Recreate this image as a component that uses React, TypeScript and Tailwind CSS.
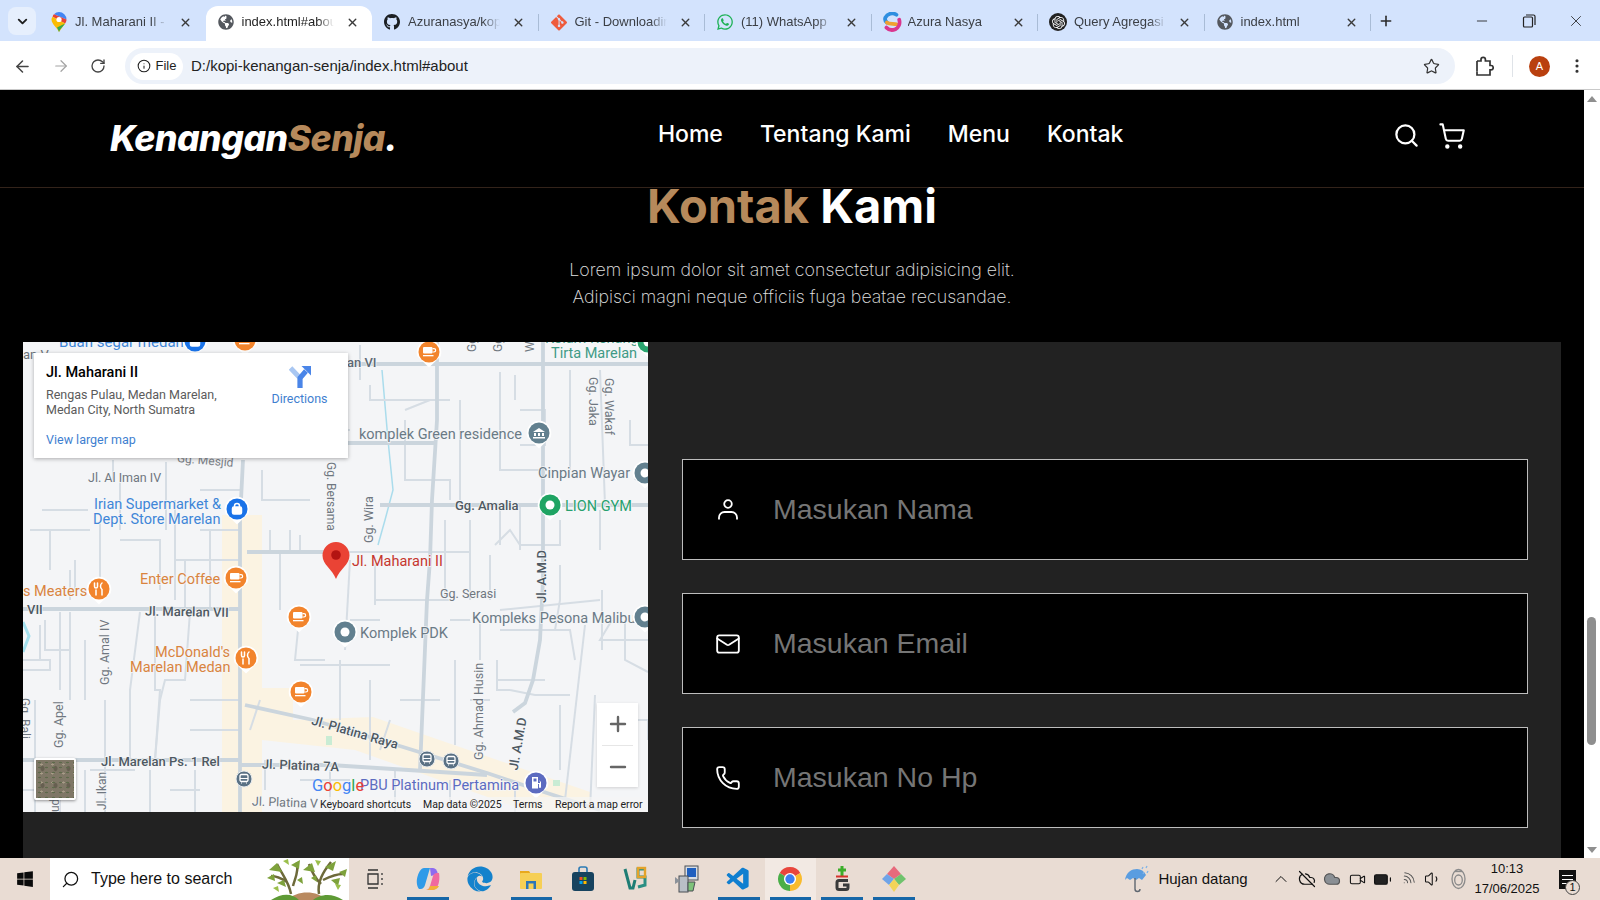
import type { ReactNode } from "react";
import {
  ArrowLeft,
  ArrowRight,
  Battery,
  ChevronDown,
  ChevronUp,
  CloudOff,
  Cloud,
  Info,
  Mail,
  Minus,
  MoreVertical,
  Phone,
  Plus,
  RotateCw,
  Search,
  ShoppingCart,
  Star,
  Video,
  Volume1,
  Wifi,
  X,
} from "lucide-react";
import { FaEdge, FaGithub, FaGlobeAmericas, FaWhatsapp, FaWindows } from "react-icons/fa";
import { SiGit, SiOpenai } from "react-icons/si";
import { VscVscode } from "react-icons/vsc";

const POPPINS = "font-['Inter','Noto_Sans',sans-serif]";

/* ---------- browser chrome ---------- */

function MapsFavicon() {
  return (
    <svg width="16" height="20" viewBox="0 0 16 20">
      <path d="M8 0a7.5 7.5 0 0 1 7.5 7.5L3 2.2A7.5 7.5 0 0 1 8 0z" fill="#4285f4" />
      <path d="M3 2.2 15.5 7.5c0 1.5-.5 2.7-1.4 4L1.6 4.8C1.9 3.6 2.3 2.9 3 2.2z" fill="#ea4335" />
      <path d="M1.6 4.8 14.1 11.500 8 20C6.500 16 .5 12 .5 7.500c0-1 .4-2 1.100-2.700z" fill="#fbbc04" />
      <path d="M6 15.500 14.100 11.500C12.500 14 9 16.500 8 20c-.4-1.700-1.200-3.100-2-4.500z" fill="#34a853" />
      <circle cx="8" cy="7.500" r="2.600" fill="#fff" />
    </svg>
  );
}

function AzuraFavicon() {
  return (
    <svg width="20" height="20" viewBox="0 0 18 18" fill="none" strokeWidth="3.400" strokeLinecap="round" className="shrink-0">
      <path d="M13 2.500A7 7 0 0 0 3 5c-.6 1.800 0 3.400 1.400 4.500" stroke="#2f8fe0" />
      <path d="M4.400 9.500c2.500 1.500 6 .8 8.600 1.500" stroke="#f0a030" />
      <path d="M15.500 7c1 3.500-.5 7-3.500 8.500-3 1.300-6 .5-8-1.500" stroke="#d9368f" />
    </svg>
  );
}

const TABS: { title: string; icon: ReactNode; active?: boolean }[] = [
  { title: "Jl. Maharani II - Google Maps", icon: <MapsFavicon /> },
  { title: "index.html#about", icon: <FaGlobeAmericas size={16} color="#54585e" />, active: true },
  { title: "Azuranasya/kopi-kenangan", icon: <FaGithub size={18} color="#1b1f23" /> },
  { title: "Git - Downloading Package", icon: <SiGit size={17} color="#ee5b3c" /> },
  { title: "(11) WhatsApp", icon: <FaWhatsapp size={18} color="#1fb257" /> },
  { title: "Azura Nasya", icon: <AzuraFavicon /> },
  {
    title: "Query Agregasi SQL",
    icon: (
      <span className="flex h-[18px] w-[18px] shrink-0 items-center justify-center rounded-full bg-[#222]">
        <SiOpenai size={13} color="#fff" />
      </span>
    ),
  },
  { title: "index.html", icon: <FaGlobeAmericas size={16} color="#54585e" /> },
];

function TabStrip() {
  return (
    <div className="flex h-[41px] shrink-0 items-end bg-[#d3e3fd] font-['Liberation_Sans',sans-serif] text-[13px] text-[#3b3f45]">
      <div className="mb-[6px] ml-2 mr-[3px] flex h-[28px] w-[28px] items-center justify-center rounded-lg bg-[#e6effd]">
        <ChevronDown size={15} strokeWidth={3} color="#1f1f1f" />
      </div>
      {TABS.map((tab, i) => (
        <div
          key={tab.title + i}
          className={
            tab.active
              ? "relative flex h-[35px] w-[166.5px] items-center rounded-t-xl bg-white pb-[3px] pl-[12px] text-[#1f1f1f]"
              : "relative flex h-[35px] w-[166.5px] items-center pb-[3px] pl-[12px]"
          }
        >
          <span className="flex w-[16px] shrink-0 items-center justify-center">{tab.icon}</span>
          <span className="ml-[8px] w-[92px] overflow-hidden whitespace-nowrap [mask-image:linear-gradient(to_right,black_82%,transparent)]">
            {tab.title}
          </span>
          <X size={13} strokeWidth={2.6} color="#3a3a3a" className="ml-[12px] shrink-0" />
          {!tab.active && i !== 0 && (
            <span className="absolute right-0 top-[8px] h-[17px] w-px bg-[#a9bcd6]" />
          )}
        </div>
      ))}
      <div className="mb-[6px] ml-[1px] flex h-[28px] w-[28px] items-center justify-center">
        <Plus size={16} strokeWidth={2.4} color="#2b2b2b" />
      </div>
      <div className="mb-[8px] ml-auto flex h-[24px] items-center">
        <span className="flex w-[46px] justify-center">
          <Minus size={16} strokeWidth={1.3} color="#222" />
        </span>
        <span className="flex w-[47px] justify-center">
          <svg width="14" height="14" viewBox="0 0 14 14" fill="none" stroke="#222" strokeWidth="1.200">
            <rect x="1.500" y="3" width="9" height="10" rx="1" />
            <path d="M4 1h7.500a1.500 1.500 0 0 1 1.500 1.500V11" />
          </svg>
        </span>
        <span className="flex w-[48px] justify-center">
          <X size={18} strokeWidth={1.1} color="#222" />
        </span>
      </div>
    </div>
  );
}

function Toolbar() {
  return (
    <div className="flex h-[49px] shrink-0 items-center border-b border-[#c9c9c9] bg-white pt-[2px] font-['Liberation_Sans',sans-serif] text-[#1f1f1f]">
      <span className="flex w-[42px] justify-center pl-[2px]">
        <ArrowLeft size={19} strokeWidth={1.9} color="#444" />
      </span>
      <span className="flex w-[38px] justify-center">
        <ArrowRight size={18} strokeWidth={1.6} color="#a3a3a3" />
      </span>
      <span className="flex w-[36px] justify-center">
        <RotateCw size={16} strokeWidth={2} color="#444" />
      </span>
      <div className="ml-[9px] flex h-[36px] w-[1330px] items-center rounded-full bg-[#edf2fa] pl-[5px]">
        <div className="flex h-[27px] w-[53px] items-center justify-center gap-[5px] rounded-full bg-white text-[13px]">
          <Info size={14} strokeWidth={1.8} />
          <span>File</span>
        </div>
        <span className="ml-[8px] text-[15px] text-[#222]">D:/kopi-kenangan-senja/index.html#about</span>
        <Star size={17} strokeWidth={1.7} color="#333" className="ml-auto mr-[15px]" />
      </div>
      <svg width="20" height="21" viewBox="0 0 20 21" fill="none" stroke="#333" strokeWidth="1.700" className="ml-[19px]">
        <path d="M3 5h4V3.500a2.200 2.200 0 0 1 4.400 0V5H16v4.500h1a2.200 2.200 0 0 1 0 4.400h-1V19H3v-3.500" />
        <path d="M3 15.500V5" />
      </svg>
      <span className="ml-[18px] h-[22px] w-px bg-[#dfe3e8]" />
      <span className="ml-[16px] flex h-[21px] w-[21px] items-center justify-center rounded-full bg-[#b9400f] text-[11px] text-white">
        A
      </span>
      <MoreVertical size={18} strokeWidth={2.2} color="#333" className="ml-[18px]" />
    </div>
  );
}

/* ---------- google map (drawn in page coordinates) ---------- */

const MAIN_ROADS = [
  "M243 460 240 520V812",
  "M245 705 313 720 403 747 487 773 547 793 600 810",
  "M348 364H648",
  "M437 342V420L432 500 430 560 427 600 420 770",
  "M543 342V580L540 640 533 680 525 703 513 712",
  "M23 609H240",
  "M23 760H240",
  "M240 765H330L487 775",
  "M247 552H336",
  "M380 505H648",
  "M348 443H435",
];

const THIN_ROADS = [
  "M336 552H470",
  "M42 510H88",
  "M120 480V530",
  "M113 460V480",
  "M166 462V530",
  "M200 490H243",
  "M50 530V570M75 560V590",
  "M120 540H160V590",
  "M30 530H90M100 520V600M70 570V600",
  "M175 500V600M185 560V610M210 530V610",
  "M262 470V500H310",
  "M275 500H300M290 530V552",
  "M270 530V552M300 535V552",
  "M200 530H240M175 560H240",
  "M40 625V660H50V670H23",
  "M23 660H50M60 612V690",
  "M45 620V650H70M70 612V700",
  "M85 640V700M105 700V812",
  "M35 700V812M60 760V812M23 790H50M85 770V812",
  "M140 612 130 690V760",
  "M155 612V690H160L155 760",
  "M190 612 185 680H165L160 700 155 760",
  "M190 700H240M190 730H240",
  "M280 610V552M300 610 295 660H325",
  "M300 665H390M340 660V720",
  "M350 560 345 650",
  "M375 560V605M375 600H450",
  "M370 385V400H450",
  "M345 430H350",
  "M360 345V380M430 400 405 410",
  "M405 420V480H450V500",
  "M460 400V500M445 520V600M470 520V600M450 620H470",
  "M500 372V470H543",
  "M520 410H545V445H520",
  "M515 375V400M570 370V470",
  "M600 370 605 505M630 420V445H648",
  "M635 480 640 470H648",
  "M500 505V545M520 505V550",
  "M490 555V600M480 620V660",
  "M495 545 510 530 520 545H560V520",
  "M560 565V600L555 630",
  "M500 610 600 600",
  "M500 630H570L575 660",
  "M497 660V690H510M497 680H545",
  "M510 690 535 695H570",
  "M560 705V770",
  "M585 625 565 800",
  "M595 695 590 810",
  "M600 510 600 550M602 590V650",
  "M612 620 600 640H648",
  "M625 620V660L648 672",
  "M430 700H400M380 620H350M340 680V700",
  "M370 680V760",
  "M400 700H440M390 720 380 750",
  "M455 660V745M490 700H470",
  "M265 790V760M330 770V812",
  "M150 770V812M195 770V812",
  "M260 700 250 730",
  "M90 770H135M170 790H200",
  "M300 780H350",
  "M628 720H648V740",
  "M395 770V812M450 780V812M515 790V812",
];

function MapLabel({
  x,
  y,
  r,
  fill = "#6f7780",
  size = 13,
  weight = 400,
  children,
}: {
  x: number;
  y: number;
  r?: number;
  fill?: string;
  size?: number;
  weight?: number;
  children: ReactNode;
}) {
  return (
    <text
      x={x}
      y={y}
      transform={r ? `rotate(${r} ${x} ${y})` : undefined}
      fill={fill}
      fontSize={size}
      fontWeight={weight}
      dominantBaseline="central"
      stroke="#f5f6f7"
      strokeWidth={1.5}
      paintOrder="stroke"
    >
      {children}
    </text>
  );
}

function Pin({ x, y, fill, glyph }: { x: number; y: number; fill: string; glyph: "cup" | "fork" | "bag" | "bank" | "dot" | "gas" }) {
  return (
    <g transform={`translate(${x} ${y})`}>
      <path d="M-11.500 4.500A12.300 12.300 0 1 1 11.500 4.500L0 15.500z" fill="#fff" />
      <circle r="10.500" fill={fill} />
      {glyph === "cup" && (
        <g fill="#fff">
          <rect x="-6" y="-5" width="9.500" height="6.500" rx="1" />
          <path d="M3.500-4h1.500a2 2 0 0 1 0 4.500H3.500v-1h1.400a1.100 1.100 0 0 0 0-2.300H3.500z" />
          <rect x="-6" y="3" width="10.500" height="1.300" />
        </g>
      )}
      {glyph === "fork" && (
        <g stroke="#fff" strokeWidth="1.500" fill="none" strokeLinecap="round">
          <path d="M-4.500-6v3.500a1.500 1.500 0 0 0 3 0V-6M-3 1V6" />
          <path d="M3-6c-2 1.500-2 5 0 6.500V6" />
        </g>
      )}
      {glyph === "bag" && (
        <g fill="none" stroke="#fff" strokeWidth="1.500">
          <rect x="-4.500" y="-2" width="9" height="7" rx="1.500" fill="#fff" />
          <path d="M-2.500-2v-1a2.500 2.500 0 0 1 5 0v1" />
        </g>
      )}
      {glyph === "bank" && <path d="M-6-1 0-5 6-1zM-5 0h2v3h-2zM-1 0H1v3h-2zM3 0h2v3H3zM-6 4H6v1.500H-6z" fill="#fff" />}
      {glyph === "dot" && <circle r="4.500" fill="#fff" />}
      {glyph === "gas" && <path d="M-4-6H2V5.500H-4zM-2.500-4.500v3h3v-3zM3-3 5-1V4a1 1 0 0 1-2 0V1H2V0h2V-1z" fill="#fff" fillRule="evenodd" />}
    </g>
  );
}

function BusStop({ x, y }: { x: number; y: number }) {
  return (
    <g transform={`translate(${x} ${y})`}>
      <circle r="8" fill="#5a7184" stroke="#e8ecef" strokeWidth="1" />
      <rect x="-4" y="-4.500" width="8" height="7" rx="1.500" fill="none" stroke="#fff" strokeWidth="1.300" />
      <path d="M-4-.5H4M-3 4h1M2 4h1" stroke="#fff" strokeWidth="1.200" />
    </g>
  );
}

function MapDrawing() {
  return (
    <svg viewBox="23 342 625 470" className="absolute inset-0 h-full w-full font-['Roboto',sans-serif]">
      <rect x="23" y="342" width="625" height="470" fill="#f4f5f7" />
      {/* commercial strips */}
      <path d="M222 515H262V688H293V720L373 717 590 792V812H530L355 750 262 740V812H222z" fill="#fbf3e2" />
      <rect x="326" y="736" width="6" height="9" fill="#c9ecd4" />
      <rect x="553" y="780" width="7" height="6" fill="#c9ecd4" />
      {/* water */}
      <path d="M382 370 388 440 393 490 385 520 378 545" fill="none" stroke="#aadcec" strokeWidth="1.500" />
      <path d="M23 622 29 636 23 652" fill="none" stroke="#a4e0ee" strokeWidth="3" />
      {THIN_ROADS.map((d) => (
        <path key={d} d={d} fill="none" stroke="#d6dde4" strokeWidth="2" />
      ))}
      {MAIN_ROADS.map((d) => (
        <path key={d} d={d} fill="none" stroke="#cbd5dd" strokeWidth="3.800" />
      ))}

      <MapLabel x={59} y={342} fill="#3f86d8" size={15}>Buah segar medan</MapLabel>
      <MapLabel x={23} y={354} fill="#6a7279" size={13}>an V</MapLabel>
      <MapLabel x={347} y={362} fill="#5f6a76" size={13} weight={500}>an VI</MapLabel>
      <MapLabel x={177} y={458} r={5} fill="#7a8087" size={12}>Gg. Mesjid</MapLabel>
      <MapLabel x={88} y={477} size={12.500}>Jl. Al Iman IV</MapLabel>
      <MapLabel x={94} y={504} fill="#3f86d8" size={14.500}>Irian Supermarket &amp;</MapLabel>
      <MapLabel x={93} y={519} fill="#3f86d8" size={14.500}>Dept. Store Marelan</MapLabel>
      <MapLabel x={331} y={462} r={90} size={12}>Gg. Bersama</MapLabel>
      <MapLabel x={140} y={579} fill="#d9843f" size={14.500}>Enter Coffee</MapLabel>
      <MapLabel x={545} y={338} fill="#3f9a86" size={14.500}>Kolam Renang</MapLabel>
      <MapLabel x={551} y={353} fill="#3f9a86" size={14.500}>Tirta Marelan</MapLabel>
      <MapLabel x={472} y={352} r={-90} size={12}>Gg.</MapLabel>
      <MapLabel x={498} y={352} r={-90} size={12}>Gg.</MapLabel>
      <MapLabel x={530} y={352} r={-90} size={12}>Wira</MapLabel>
      <MapLabel x={593} y={377} r={90} size={12.500}>Gg. Jaka</MapLabel>
      <MapLabel x={609} y={378} r={90} size={12.500}>Gg. Wakaf</MapLabel>
      <MapLabel x={359} y={434} fill="#6a7a86" size={14.500}>komplek Green residence</MapLabel>
      <MapLabel x={538} y={473} fill="#6a7a86" size={14.500}>Cinpian Wayar</MapLabel>
      <MapLabel x={455} y={505} fill="#4e5962" size={13} weight={500}>Gg. Amalia</MapLabel>
      <MapLabel x={565} y={506} fill="#27a06f" size={14.500}>LION GYM</MapLabel>
      <MapLabel x={368} y={543} r={-90} size={12.500}>Gg. Wira</MapLabel>
      <MapLabel x={541} y={603} r={-90} fill="#4e5962" size={13} weight={500}>Jl. A.M.D</MapLabel>
      <MapLabel x={352} y={561} fill="#c5352e" size={14.500}>Jl. Maharani II</MapLabel>
      <MapLabel x={23} y={591} fill="#d9843f" size={14.500}>s Meaters</MapLabel>
      <MapLabel x={27} y={609} fill="#4e5962" size={13} weight={500}>VII</MapLabel>
      <MapLabel x={145} y={611} r={1} fill="#4e5962" size={13} weight={500}>Jl. Marelan VII</MapLabel>
      <MapLabel x={104} y={685} r={-90} size={12.500}>Gg. Amal IV</MapLabel>
      <MapLabel x={58} y={748} r={-90} size={12.500}>Gg. Apel</MapLabel>
      <MapLabel x={155} y={652} fill="#d9843f" size={14.500}>McDonald&apos;s</MapLabel>
      <MapLabel x={130} y={667} fill="#d9843f" size={14.500}>Marelan Medan</MapLabel>
      <MapLabel x={101} y={761} fill="#4e5962" size={13} weight={500}>Jl. Marelan Ps. 1 Rel</MapLabel>
      <MapLabel x={262} y={764} r={2} fill="#4e5962" size={13} weight={500}>Jl. Platina 7A</MapLabel>
      <MapLabel x={252} y={801} r={2} size={12.500}>Jl. Platina V</MapLabel>
      <MapLabel x={102} y={810} r={-90} size={12}>Jl. Ikan</MapLabel>
      <MapLabel x={55} y={812} r={-90} size={12}>ud</MapLabel>
      <MapLabel x={25} y={698} r={90} size={12}>Gg. Bali</MapLabel>
      <MapLabel x={440} y={593} size={12.500}>Gg. Serasi</MapLabel>
      <MapLabel x={472} y={618} fill="#6a7a86" size={14.500}>Kompleks Pesona Malibu</MapLabel>
      <MapLabel x={360} y={633} fill="#6a7a86" size={14.500}>Komplek PDK</MapLabel>
      <MapLabel x={478} y={760} r={-90} size={12.500}>Gg. Ahmad Husin</MapLabel>
      <MapLabel x={513} y={770} r={-80} fill="#4e5962" size={13} weight={500}>Jl. A.M.D</MapLabel>
      <MapLabel x={312} y={720} r={16} fill="#4e5962" size={13} weight={500}>Jl. Platina Raya</MapLabel>
      <MapLabel x={360} y={785} fill="#5c6bc0" size={14.500}>PBU Platinum Pertamina</MapLabel>

      <Pin x={195} y={341} fill="#1a73e8" glyph="bag" />
      <Pin x={245} y={340} fill="#f2842c" glyph="cup" />
      <Pin x={429} y={352} fill="#f2842c" glyph="cup" />
      <Pin x={648} y={342} fill="#2aa56f" glyph="dot" />
      <Pin x={539} y={433} fill="#62808f" glyph="bank" />
      <Pin x={645} y={473} fill="#62808f" glyph="dot" />
      <Pin x={550} y={505} fill="#1fa463" glyph="dot" />
      <Pin x={237} y={509} fill="#1a73e8" glyph="bag" />
      <Pin x={236} y={578} fill="#f2842c" glyph="cup" />
      <Pin x={99} y={589} fill="#f2842c" glyph="fork" />
      <Pin x={299} y={617} fill="#f2842c" glyph="cup" />
      <Pin x={246} y={658} fill="#f2842c" glyph="fork" />
      <Pin x={301} y={692} fill="#f2842c" glyph="cup" />
      <Pin x={345} y={632} fill="#62808f" glyph="dot" />
      <Pin x={645} y={617} fill="#62808f" glyph="dot" />
      <Pin x={536} y={783} fill="#5c6bc0" glyph="gas" />
      <BusStop x={244} y={779} />
      <BusStop x={427} y={759} />
      <BusStop x={451} y={761} />

      {/* destination marker */}
      <g transform="translate(336 558)">
        <path d="M0-16A13.500 13.500 0 0 1 13.500-2.500C13.500 6.500 3.500 11.500 0 21-3.500 11.500-13.500 6.500-13.500-2.500A13.500 13.500 0 0 1 0-16z" fill="#ea4335" />
        <circle cy="-3" r="4.800" fill="#b31412" />
      </g>

      <text x={312} y={785} fontSize={16.500} fontFamily="Roboto, sans-serif" dominantBaseline="central">
        <tspan fill="#4285f4">G</tspan>
        <tspan fill="#ea4335">o</tspan>
        <tspan fill="#fbbc04">o</tspan>
        <tspan fill="#4285f4">g</tspan>
        <tspan fill="#34a853">l</tspan>
        <tspan fill="#ea4335">e</tspan>
      </text>
    </svg>
  );
}

function MapPanel() {
  return (
    <div className="relative h-[470px] w-[625px] shrink-0 overflow-hidden font-['Roboto',sans-serif]">
      <MapDrawing />

      <div className="absolute left-[11px] top-[11px] flex h-[105px] w-[314px] bg-white shadow-[0_1px_4px_rgba(0,0,0,0.3)]">
        <div className="w-[228px] pl-[12px] pt-[10px]">
          <p className="text-[14.5px] font-medium leading-[20px] text-black">Jl. Maharani II</p>
          <p className="mt-[4px] whitespace-nowrap text-[12.500px] leading-[15px] text-[#5b5b5b]">
            Rengas Pulau, Medan Marelan,
            <br />
            Medan City, North Sumatra
          </p>
          <p className="mt-[15px] text-[12.500px] leading-[15px] text-[#3f7fd0]">View larger map</p>
        </div>
        <div className="flex flex-1 flex-col items-center pr-[11px] pt-[12px]">
          <svg width="22" height="24" viewBox="0 0 22 24" fill="none">
            <path d="M1.500 3 11 13v10" stroke="#a9c7f2" strokeWidth="5" />
            <path d="M11 23V13l6-7" stroke="#4a85e8" strokeWidth="5" />
            <path d="M12.500 1H22v9.500z" fill="#4a85e8" />
          </svg>
          <span className="mt-[2px] text-[12.500px] leading-[15px] text-[#3f7fd0]">Directions</span>
        </div>
      </div>

      <div className="absolute left-[11px] top-[416px] h-[42px] w-[42px] rounded-[2px] border-2 border-white bg-[#7f7766] [background-image:radial-gradient(#5d6a4a_1px,transparent_1.5px),radial-gradient(#a89c88_1px,transparent_1.5px),radial-gradient(#665f50_1.5px,transparent_2.5px)] [background-size:7px_5px,11px_9px,13px_17px] shadow-[0_1px_3px_rgba(0,0,0,0.4)]" />

      <div className="absolute left-[574px] top-[361px] flex h-[84px] w-[41px] flex-col items-center bg-white shadow-[0_1px_3px_rgba(0,0,0,0.15)]">
        <span className="flex h-[42px] items-center">
          <Plus size={24} strokeWidth={2.4} color="#666" />
        </span>
        <span className="h-px w-[31px] bg-[#e6e6e6]" />
        <span className="flex h-[41px] items-center">
          <Minus size={24} strokeWidth={2.4} color="#666" />
        </span>
      </div>

      <div className="absolute bottom-0 left-[297px] flex h-[15px] w-[328px] items-center whitespace-nowrap bg-[#f5f5f5]/70 pt-[1px] text-[10.5px] leading-none text-[#222]">
        <span className="w-[103px]">Keyboard shortcuts</span>
        <span className="w-[90px]">Map data ©2025</span>
        <span className="w-[42px]">Terms</span>
        <span>Report a map error</span>
      </div>
    </div>
  );
}

/* ---------- site ---------- */

function UserGlyph() {
  return (
    <svg width="20" height="21" viewBox="0 0 20 21" fill="none" stroke="#fff" strokeWidth="1.800">
      <circle cx="10" cy="5" r="3.800" />
      <path d="M1 20.500v-2a5.500 5.500 0 0 1 5.500-5.500h7a5.500 5.500 0 0 1 5.500 5.500v2" />
    </svg>
  );
}

const FIELDS = [
  { placeholder: "Masukan Nama", icon: <UserGlyph /> },
  { placeholder: "Masukan Email", icon: <Mail size={26} strokeWidth={1.7} color="#fff" /> },
  { placeholder: "Masukan No Hp", icon: <Phone size={26} strokeWidth={1.7} color="#fff" /> },
];

function Navbar() {
  return (
    <header className={`flex h-[98px] shrink-0 items-center border-b border-[#33231a] pl-[110px] text-white ${POPPINS}`}>
      <a className="text-[35.5px] font-extrabold italic tracking-[-0.5px]">
        Kenangan<span className="text-[#b6895b]">Senja</span>.
      </a>
      <nav className="ml-[261px] flex gap-[37px] pb-[9px] text-[23px] font-medium">
        <a>Home</a>
        <a>Tentang Kami</a>
        <a>Menu</a>
        <a>Kontak</a>
      </nav>
      <div className="ml-[270px] flex items-center gap-[18px] pb-[6px]">
        <Search size={27} strokeWidth={2} />
        <ShoppingCart size={28} strokeWidth={1.8} />
      </div>
    </header>
  );
}

function ContactSection() {
  return (
    <section className="flex min-h-0 flex-1 flex-col">
      <h2 className={`text-center text-[47px] font-bold leading-[36px] text-white ${POPPINS}`}>
        <span className="text-[#b6895b]">Kontak</span> Kami
      </h2>
      <p className={`mt-[32px] text-center text-[17.8px] font-extralight leading-[27px] text-[#e2e2e2] ${POPPINS}`}>
        Lorem ipsum dolor sit amet consectetur adipisicing elit.
        <br />
        Adipisci magni neque officiis fuga beatae recusandae.
      </p>
      <div className="mx-[23px] mt-[32px] flex min-h-0 flex-1 items-start bg-[#222]">
        <MapPanel />
        <form className="flex flex-1 flex-col gap-[33px] pl-[34px] pr-[33px] pt-[117px] font-['Liberation_Sans',sans-serif]">
          {FIELDS.map((f) => (
            <label key={f.placeholder} className="flex h-[101px] shrink-0 items-center border border-[#bdbdbd] bg-black">
              <span className="flex w-[90px] shrink-0 justify-center">{f.icon}</span>
              <input
                placeholder={f.placeholder}
                className="flex-1 bg-transparent text-[28.5px] text-white outline-none placeholder:text-[#757575]"
              />
            </label>
          ))}
        </form>
      </div>
    </section>
  );
}

function Scrollbar() {
  return (
    <div className="relative w-[16px] shrink-0 bg-white">
      <span className="absolute left-[3px] top-[6px] h-0 w-0 border-x-[5px] border-b-[6px] border-x-transparent border-b-[#8f8f8f]" />
      <span className="absolute left-[3px] top-[527px] h-[128px] w-[9px] rounded-full bg-[#8f8f8f]" />
      <span className="absolute bottom-[5px] left-[3px] h-0 w-0 border-x-[5px] border-t-[6px] border-x-transparent border-t-[#8f8f8f]" />
    </div>
  );
}

/* ---------- taskbar ---------- */

function ChromeLogo() {
  return (
    <svg width="26" height="26" viewBox="0 0 24 24">
      <path d="M12 12 2.470 6.500A11 11 0 0 1 21.530 6.500z" fill="#e8453c" />
      <path d="M12 12 21.530 6.500A11 11 0 0 1 12 23z" fill="#f9bb2d" />
      <path d="M12 12V23A11 11 0 0 1 2.470 6.500z" fill="#4aae48" />
      <circle cx="12" cy="12" r="5.600" fill="#fff" />
      <circle cx="12" cy="12" r="4.300" fill="#3c7ff0" />
    </svg>
  );
}

const TASK_APPS: { key: string; icon: ReactNode; open?: boolean; active?: boolean }[] = [
  {
    key: "copilot",
    open: true,
    icon: (
      <svg width="26" height="26" viewBox="0 0 26 26">
        <path d="M9 2h6l-5 17c-.6 2-2 4-4.500 4H4C1.500 20 1 14 3 9c1-3 3-7 6-7z" fill="#2f9be8" />
        <path d="M15 2h3c2.500 0 4 2 5 6l-7 2z" fill="#8d6bf0" />
        <path d="M17 24h-6c2 0 3.500-2 4-4l3-10c.5-2 2-3 4-3h2c1 5 0 13-3 15-1 1.500-2.500 2-4 2z" fill="#f06aa0" />
        <path d="M17 24h-6c2 0 3.500-1.500 4-4h9c-1 2.500-4 4-7 4z" fill="#f2b13a" />
      </svg>
    ),
  },
  {
    key: "edge",
    icon: <FaEdge size={26} color="#1482cc" />,
  },
  {
    key: "explorer",
    open: true,
    icon: (
      <svg width="24" height="24" viewBox="0 0 24 24">
        <path d="M1 4h9l2 3h-11z" fill="#e8a91d" />
        <rect x="1" y="6" width="22" height="16" rx="1" fill="#f6cf55" />
        <rect x="7" y="14" width="10" height="8" fill="#2c76b8" />
        <rect x="9.500" y="16.500" width="5" height="5.500" fill="#f6cf55" />
      </svg>
    ),
  },
  {
    key: "store",
    icon: (
      <svg width="24" height="26" viewBox="0 0 24 26">
        <path d="M8 6V3a2 2 0 0 1 2-2h4a2 2 0 0 1 2 2v3" fill="none" stroke="#2b7bb5" strokeWidth="1.600" />
        <rect x="1" y="6" width="22" height="19" rx="3" fill="#17435f" />
        <rect x="8.500" y="11" width="3" height="3" fill="#f25022" />
        <rect x="12.500" y="11" width="3" height="3" fill="#7fba00" />
        <rect x="8.500" y="15" width="3" height="3" fill="#00a4ef" />
        <rect x="12.500" y="15" width="3" height="3" fill="#ffb900" />
      </svg>
    ),
  },
  {
    key: "vs",
    icon: (
      <svg width="24" height="26" viewBox="0 0 24 26" fill="none" strokeWidth="3">
        <path d="M2 3 7 22h3l2-8" stroke="#1e7d74" />
        <path d="M22 3H15v8h7v8l-7 2" stroke="#2a8f83" />
        <rect x="15" y="2" width="7" height="9" stroke="#e3a32b" strokeWidth="2.400" />
      </svg>
    ),
  },
  {
    key: "setup",
    icon: (
      <svg width="26" height="28" viewBox="0 0 26 28">
        <rect x="11" y="1" width="13" height="14" fill="#d8dde3" stroke="#4a4f55" />
        <rect x="13" y="3" width="9" height="9" fill="#1f5fbf" />
        <rect x="5" y="11" width="9" height="16" fill="#b9bfc6" stroke="#4a4f55" />
        <path d="M14 17h7l-2 9h-5z" fill="#7ec27a" stroke="#4a4f55" />
        <path d="M1 12l5 4-5 3z" fill="#8c929a" />
      </svg>
    ),
  },
  { key: "vscode", open: true, icon: <VscVscode size={27} color="#0f7fd0" /> },
  { key: "chrome", open: true, active: true, icon: <ChromeLogo /> },
  {
    key: "gitgui",
    open: true,
    icon: (
      <svg width="22" height="28" viewBox="0 0 22 28">
        <path d="M11 1v10M7 5h8" stroke="#3dae2b" strokeWidth="3" />
        <path d="M5 11.500h12" stroke="#d6322d" strokeWidth="2" />
        <path d="M17 15.500H8a2 2 0 0 0-2 2v5a2 2 0 0 0 2 2h7a2 2 0 0 0 2-2V20h-5" fill="none" stroke="#3a3a3a" strokeWidth="3" />
      </svg>
    ),
  },
  {
    key: "gem",
    open: true,
    icon: (
      <svg width="26" height="28" viewBox="0 0 26 28">
        <path d="M13 1 6 9l7 5 7-5z" fill="#e76a7c" />
        <path d="M6 9 1 14l7 6 5-6z" fill="#6fa4e8" />
        <path d="M20 9l5 5-7 6-5-6z" fill="#6fc36d" />
        <path d="M8 20l5-6 5 6-5 7z" fill="#f2d458" />
      </svg>
    ),
  },
];

function Taskbar() {
  return (
    <footer className="flex h-[42px] shrink-0 items-center bg-[#e9dcd3] font-['Liberation_Sans',sans-serif] text-[#111]">
      <span className="flex w-[50px] justify-center">
        <FaWindows size={18} color="#0a0a0a" />
      </span>
      <div className="flex h-full w-[299px] items-center bg-white pl-[11px]">
        <Search size={19} strokeWidth={1.6} className="-scale-x-100" />
        <span className="ml-[11px] text-[16px]">Type here to search</span>
        <svg width="84" height="42" viewBox="0 0 84 42" className="ml-auto" fill="none">
          <path d="M22 42C32 32 52 32 62 42z" fill="#b98a60" />
          <path d="M6 42C18 34 28 36 34 42zM48 42c6-5 18-8 30 0z" fill="#5e9a35" />
          <path d="M26 36C24 24 18 18 12 6M28 28C30 20 34 14 32 4M22 24C16 20 12 18 6 18M54 36C52 24 58 14 66 4M56 26C50 20 46 12 44 6M58 22C66 18 72 16 78 16" stroke="#6d6a3a" strokeWidth="2.500" />
          <path d="M4 12l8-7 5 9zM26 7l9-5-1 9zM38 12l9-7 3 9zM60 9l11-6-3 10zM12 25l7-3 2 7zM66 22l9-2-2 8zM2 20l7-4 1 7zM74 14l8-3-2 8zM46 20l5-3 1 7zM32 22l5-3 1 7z" fill="#7ea23c" />
          <path d="M18 3l5-2 1 6zM50 2l6 1-3 5zM70 26l6 1-3 5zM8 30l5-2 1 6z" fill="#9bbf4b" />
        </svg>
      </div>
      <span className="flex w-[53px] justify-center">
        <svg width="17" height="20" viewBox="0 0 17 20" fill="none" stroke="#333" strokeWidth="1.300">
          <path d="M1 1h10M1 19h10M1 5h10v10H1zM15 4v2M15 9v2M15 14v2" />
        </svg>
      </span>
      {TASK_APPS.map((app) => (
        <div
          key={app.key}
          className={
            app.active
              ? "relative flex h-full w-[51.8px] items-center justify-center bg-[#f2e9e3]"
              : "relative flex h-full w-[51.8px] items-center justify-center"
          }
        >
          {app.icon}
          {app.open && <span className="absolute inset-x-[5px] bottom-0 h-[3px] bg-[#1667a8]" />}
        </div>
      ))}
      <div className="ml-auto flex items-center pr-[9px]">
        <svg width="26" height="30" viewBox="0 0 26 30" fill="none">
          <path d="M1 16C2 8 8 5 13 5c4 0 7 2 9 6l-4 5-3-2-3 2-3-2-3 2-3-2z" fill="#5a9de0" />
          <path d="M11 14v11a2.500 2.500 0 0 0 5 0" stroke="#5f6770" strokeWidth="1.400" />
          <path d="M19 3l-1 2M23 2l-1 2M24 7l-1 2M20 8l-1 2" stroke="#7fb4e8" strokeWidth="1.300" />
        </svg>
        <span className="ml-[8px] mr-[21px] text-[15px]">Hujan datang</span>
        {[
          <ChevronUp key="up" size={20} strokeWidth={1.2} />,
          <CloudOff key="off" size={18} strokeWidth={1.6} />,
          <Cloud key="cloud" size={18} strokeWidth={1.6} fill="#8a8f94" color="#555" />,
          <Video key="vid" size={17} strokeWidth={1.5} />,
          <Battery key="bat" size={19} strokeWidth={1.5} fill="#222" />,
          <Wifi key="wifi" size={16} strokeWidth={1.5} className="rotate-45" color="#555" />,
          <Volume1 key="vol" size={18} strokeWidth={1.4} />,
          <svg key="ring" width="15" height="22" viewBox="0 0 15 22" fill="none" stroke="#8a8a8a" strokeWidth="1.300">
            <ellipse cx="7.500" cy="11" rx="6.500" ry="9.500" />
            <ellipse cx="7.500" cy="12" rx="3.800" ry="5" />
            <path d="M4 3.500h7" />
          </svg>,
        ].map((icon) => (
          <span key={icon.key} className="flex w-[25.3px] justify-center">
            {icon}
          </span>
        ))}
        <div className="w-[72px] text-center text-[13px] leading-[20px]">
          <p>10:13</p>
          <p>17/06/2025</p>
        </div>
        <div className="relative flex w-[48px] justify-center">
          <span className="flex h-[19px] w-[17px] flex-col justify-center gap-[3px] bg-[#111] px-[3px]">
            <span className="h-px bg-white" />
            <span className="h-px bg-white" />
            <span className="h-px bg-white" />
          </span>
          <span className="absolute left-[22px] top-[10px] flex h-[15px] w-[15px] items-center justify-center rounded-full border border-[#444] bg-[#e9dcd3] text-[11px] leading-none">
            1
          </span>
        </div>
      </div>
    </footer>
  );
}

export default function App() {
  return (
    <div className="flex h-screen w-full flex-col overflow-hidden bg-black">
      <TabStrip />
      <Toolbar />
      <div className="flex min-h-0 flex-1">
        <main className="flex min-w-0 flex-1 flex-col overflow-hidden bg-black">
          <Navbar />
          <ContactSection />
        </main>
        <Scrollbar />
      </div>
      <Taskbar />
    </div>
  );
}
